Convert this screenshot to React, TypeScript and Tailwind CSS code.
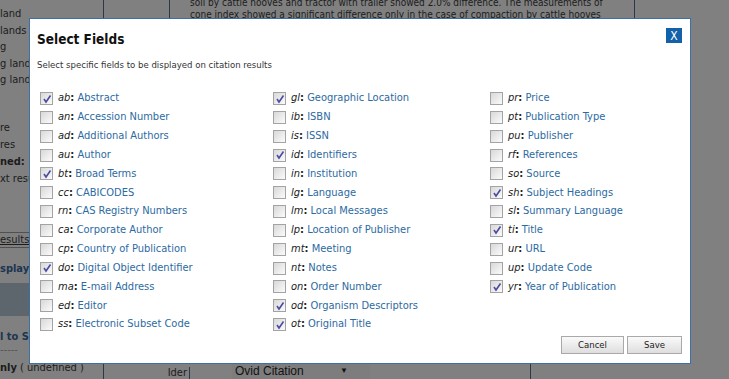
type Field = [string, string, boolean?];

const columns: Field[][] = [
  [
    ['ab', 'Abstract', true],
    ['an', 'Accession Number'],
    ['ad', 'Additional Authors'],
    ['au', 'Author'],
    ['bt', 'Broad Terms', true],
    ['cc', 'CABICODES'],
    ['rn', 'CAS Registry Numbers'],
    ['ca', 'Corporate Author'],
    ['cp', 'Country of Publication'],
    ['do', 'Digital Object Identifier', true],
    ['ma', 'E-mail Address'],
    ['ed', 'Editor'],
    ['ss', 'Electronic Subset Code'],
  ],
  [
    ['gl', 'Geographic Location', true],
    ['ib', 'ISBN'],
    ['is', 'ISSN'],
    ['id', 'Identifiers', true],
    ['in', 'Institution'],
    ['lg', 'Language'],
    ['lm', 'Local Messages'],
    ['lp', 'Location of Publisher'],
    ['mt', 'Meeting'],
    ['nt', 'Notes'],
    ['on', 'Order Number'],
    ['od', 'Organism Descriptors', true],
    ['ot', 'Original Title', true],
  ],
  [
    ['pr', 'Price'],
    ['pt', 'Publication Type'],
    ['pu', 'Publisher'],
    ['rf', 'References'],
    ['so', 'Source'],
    ['sh', 'Subject Headings', true],
    ['sl', 'Summary Language'],
    ['ti', 'Title', true],
    ['ur', 'URL'],
    ['up', 'Update Code'],
    ['yr', 'Year of Publication', true],
  ],
];

const colWidths = ['w-[233px]', 'w-[217px]', 'flex-1'];

function Checkbox({ checked }: { checked?: boolean }) {
  return (
    <span className="relative flex h-[13px] w-[13px] shrink-0 items-center justify-center border border-[#a3a3a3] bg-gradient-to-br from-[#d8d8d8] to-[#fbfbfb]">
      {checked && (
        <svg width="10" height="10" viewBox="0 0 10 10" className="absolute">
          <path d="M2 5 L4 8 L8.5 1.5" fill="none" stroke="#4b4ba0" strokeWidth="1.6" />
        </svg>
      )}
    </span>
  );
}

function FieldRow({ field }: { field: Field }) {
  const [code, name, checked] = field;
  return (
    <div className="flex h-[18.83px] items-center">
      <Checkbox checked={checked} />
      <span className="ml-[5px] whitespace-nowrap text-[11px] text-[#222]">
        <i>{code}</i>
        <span className="font-bold">:</span>{' '}
        <span className="text-[#2c6aa2]">{name}</span>
      </span>
    </div>
  );
}

function Background() {
  return (
    <div className="flex h-[379px] w-full bg-[#808080] text-[11px] text-[#1c1c1c]">
      {/* left nav column of the page */}
      <div className="flex w-[104px] shrink-0 flex-col whitespace-nowrap border-r border-[#2b3a48]">
        <div className="flex flex-col pt-[6px] leading-[16.5px]">
          <span>land</span>
          <span>lands</span>
          <span>g</span>
          <span>g land</span>
          <span>g land</span>
        </div>
        <div className="mt-[30px] flex flex-col leading-[17px]">
          <span>re</span>
          <span>res</span>
          <span className="font-bold">ned:</span>
          <span>xt resu</span>
        </div>
        <div className="mt-[45px] h-[16px] border-y border-[#505050] underline leading-[14px]">esults</div>
        <div className="mt-[13px] font-bold text-[#1d3550]">splay</div>
        <div className="mt-[6px] h-[33px] bg-[#5d666d]" />
        <div className="mt-[13px] font-bold text-[#1d3550]">l to Se</div>
        <div className="leading-[8px] text-[#555]">-----</div>
        <div className="mt-[6px]"><b>nly</b> ( undefined )</div>
      </div>

      {/* main column of the page */}
      <div className="flex flex-1 flex-col">
        <div className="flex h-[18px] shrink-0 overflow-hidden">
          <div className="w-[66px] shrink-0 border-r border-[#2b3a48]" />
          <div className="w-[465px] shrink-0 overflow-hidden whitespace-nowrap border-r border-[#2b3a48] pl-[20px] text-[10px] leading-[12px]">
            <div className="-mt-[3px]">soil by cattle hooves and tractor with trailer showed 2.0% difference. The measurements of</div>
            <div>cone index showed a significant difference only in the case of compaction by cattle hooves</div>
          </div>
        </div>
        <div className="flex-1" />
        <div className="flex h-[18px] shrink-0 items-end">
          <div className="w-[86px] shrink-0 border-r border-[#2b3a48] pr-[2px] text-right leading-[12px]">Ider</div>
          <div className="ml-[42px] flex h-[17px] w-[138px] items-center justify-between bg-[#7d7d7d] pl-[3px] pr-[22px] text-[12px] text-[#111]" style={{ fontFamily: '"Liberation Sans", sans-serif' }}>
            <span>Ovid Citation</span>
            <span className="text-[8px]">▼</span>
          </div>
          <div className="ml-[160px] h-[15px] border-l border-[#2b3a48]" />
        </div>
      </div>
    </div>
  );
}

export default function App() {
  return (
    <div className="relative h-[379px] w-full overflow-hidden" style={{ fontFamily: '"DejaVu Sans Condensed", "DejaVu Sans", sans-serif' }}>
      <Background />

      <div className="absolute left-[29px] top-[18px] flex h-[346px] w-[662px] flex-col border border-[#3a70a6] bg-white">
        <div className="flex items-start justify-between pl-[7px] pr-[8px] pt-[9px]">
          <h2 className="mt-[3px] text-[13.5px] font-bold leading-[16px] text-[#111]">Select Fields</h2>
          <button className="flex h-[15px] w-[16px] items-center justify-center bg-[#1361a9] text-[12px] leading-none text-white">
            X
          </button>
        </div>
        <p className="mt-[11px] pl-[7px] text-[9.5px] text-[#333]">
          Select specific fields to be displayed on citation results
        </p>
        <div className="mt-[17px] flex pl-[10px]">
          {columns.map((col, i) => (
            <div key={i} className={`flex flex-col ${colWidths[i]}`}>
              {col.map((f) => (
                <FieldRow key={f[0]} field={f} />
              ))}
            </div>
          ))}
        </div>
        <div className="mt-auto flex justify-end gap-[3px] pb-[9px] pr-[8px]">
          <button className="h-[18px] w-[63px] border border-[#a9a9a9] bg-gradient-to-b from-[#fafafa] to-[#dedede] text-[9.5px] text-[#222]">
            Cancel
          </button>
          <button className="h-[18px] w-[55px] border border-[#a9a9a9] bg-gradient-to-b from-[#fafafa] to-[#dedede] text-[9.5px] text-[#222]">
            Save
          </button>
        </div>
      </div>
    </div>
  );
}
